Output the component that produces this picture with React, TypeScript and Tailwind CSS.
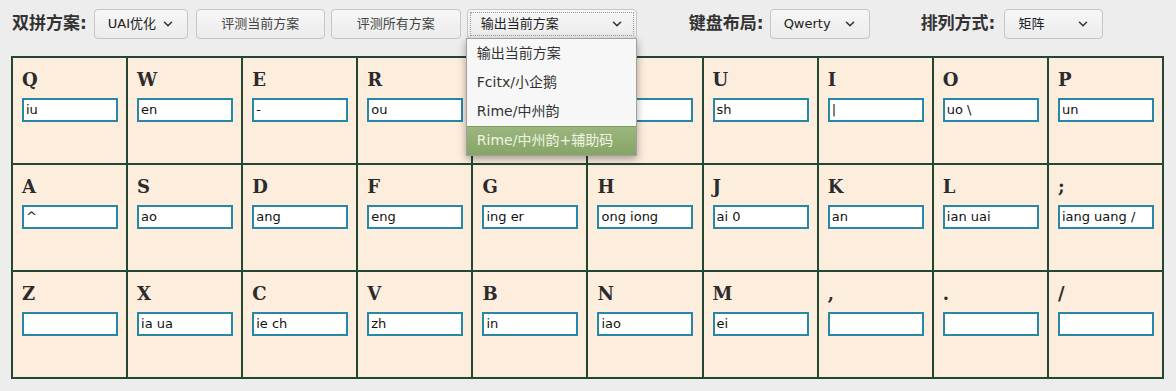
import { ChevronDown } from "lucide-react";

const SANS = "font-['DejaVu_Sans','Noto_Sans_CJK_SC',sans-serif]";

type Key = { k: string; v: string };

const ROWS: Key[][] = [
  [
    { k: "Q", v: "iu" },
    { k: "W", v: "en" },
    { k: "E", v: "-" },
    { k: "R", v: "ou" },
    { k: "T", v: "" },
    { k: "Y", v: "" },
    { k: "U", v: "sh" },
    { k: "I", v: "|" },
    { k: "O", v: "uo \\" },
    { k: "P", v: "un" },
  ],
  [
    { k: "A", v: "^" },
    { k: "S", v: "ao" },
    { k: "D", v: "ang" },
    { k: "F", v: "eng" },
    { k: "G", v: "ing er" },
    { k: "H", v: "ong iong" },
    { k: "J", v: "ai 0" },
    { k: "K", v: "an" },
    { k: "L", v: "ian uai" },
    { k: ";", v: "iang uang /" },
  ],
  [
    { k: "Z", v: "" },
    { k: "X", v: "ia ua" },
    { k: "C", v: "ie ch" },
    { k: "V", v: "zh" },
    { k: "B", v: "in" },
    { k: "N", v: "iao" },
    { k: "M", v: "ei" },
    { k: ",", v: "" },
    { k: ".", v: "" },
    { k: "/", v: "" },
  ],
];

function Select({ label, width, open }: { label: string; width: string; open?: boolean }) {
  return (
    <div
      className={`${width} h-[30px] flex items-center justify-between pl-[13px] pr-[12px] rounded-[4px] border border-[#c9c5c1] bg-gradient-to-b from-[#f7f7f7] to-[#ebebeb] text-[13px] text-[#222] ${open ? "outline outline-1 outline-dotted outline-offset-[-4px] outline-[#9a9a9a]" : ""}`}
    >
      <span>{label}</span>
      <ChevronDown size={14} strokeWidth={2.6} className="text-[#333]" />
    </div>
  );
}

function Button({ label, width }: { label: string; width: string }) {
  return (
    <div
      className={`${width} h-[30px] flex items-center justify-center rounded-[4px] border border-[#c9c5c1] bg-gradient-to-b from-[#f7f7f7] to-[#ebebeb] text-[13px] text-[#444]`}
    >
      {label}
    </div>
  );
}

export default function App() {
  return (
    <div className={`w-[1176px] h-[391px] bg-[#ededed] ${SANS} relative`}>
      {/* toolbar */}
      <div className="flex items-center h-[47px] pl-[12px]">
        <span className="text-[17px] font-bold text-[#333]">双拼方案:</span>
        <div className="ml-[7px]">
          <Select label="UAI优化" width="w-[94px]" />
        </div>
        <div className="ml-[8px]">
          <Button label="评测当前方案" width="w-[129px]" />
        </div>
        <div className="ml-[6px]">
          <Button label="评测所有方案" width="w-[130px]" />
        </div>
        <div className="ml-[6px] relative">
          <Select label="输出当前方案" width="w-[170px]" open />
          {/* open dropdown list */}
          <div className="absolute left-[-1px] top-[29px] w-[171px] z-10 bg-[#f7f7f7] border border-[#a0a0a0] shadow-[0_3px_8px_rgba(0,0,0,0.35)] text-[14px] text-[#333]">
            <div className="h-[29px] flex items-center pl-[10px]">输出当前方案</div>
            <div className="h-[29px] flex items-center pl-[10px]">Fcitx/小企鹅</div>
            <div className="h-[29px] flex items-center pl-[10px]">Rime/中州韵</div>
            <div className="h-[29px] flex items-center pl-[10px] bg-gradient-to-b from-[#9cb67e] to-[#86a565] text-[#eef4e4] border-t border-[#7e9a60]">
              Rime/中州韵+辅助码
            </div>
          </div>
        </div>
        <span className="ml-[52px] text-[17px] font-bold text-[#333]">键盘布局:</span>
        <div className="ml-[6px]">
          <Select label="Qwerty" width="w-[100px]" />
        </div>
        <span className="ml-[51px] text-[17px] font-bold text-[#333]">排列方式:</span>
        <div className="ml-[9px]">
          <Select label="矩阵" width="w-[99px]" />
        </div>
      </div>

      {/* keyboard grid */}
      <div className="ml-[11px] mt-[9px] w-[1153px] grid grid-cols-10 border-l-2 border-t-2 border-[#234733]">
        {ROWS.flat().map((key) => (
          <div
            key={key.k}
            className="h-[107px] bg-[#fdeddd] border-r-2 border-b-2 border-[#234733] pl-[9px] pt-[9px]"
          >
            <div className="h-[26px] text-[18px] font-bold leading-[26px] text-[#2b2b2b] font-['DejaVu_Serif',serif]">
              {key.k}
            </div>
            <div className="mt-[5px] w-[96px] h-[24px] bg-white border-2 border-[#2787a7] pl-[2px] flex items-center text-[13px] text-[#111] whitespace-pre overflow-hidden">
              {key.v}
            </div>
          </div>
        ))}
      </div>
    </div>
  );
}
